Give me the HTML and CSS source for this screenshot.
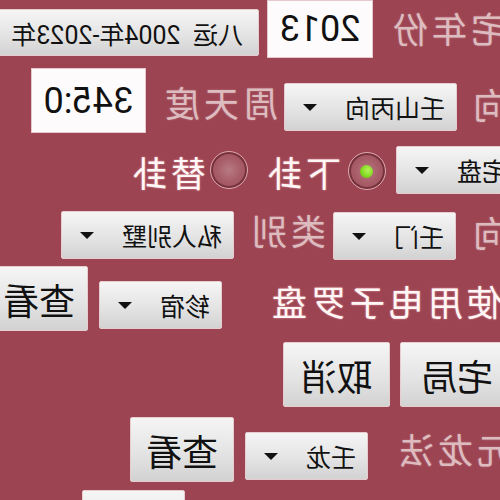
FILE: index.html
```html
<!DOCTYPE html>
<html lang="zh-CN">
<head>
<meta charset="utf-8">
<title>玄空飞星</title>
<link rel="stylesheet" href="styles.css">
</head>
<body>
<div class="page">
  <div class="row r1">
    <span class="label dim lbl-year">住宅年份</span>
    <div class="field f-year">2013</div>
    <div class="btn btn-period">八运&nbsp; 2004年-2023年</div>
  </div>

  <div class="row r2">
    <span class="label dim lbl-zuo">坐向</span>
    <div class="spinner sp-r2"><span class="sp-text">壬山丙向</span><span class="caret"></span></div>
    <span class="label dim lbl-deg">周天度</span>
    <div class="field f-deg">345:0</div>
  </div>

  <div class="row r3">
    <div class="spinner sp-r3"><span class="sp-text">宅盘</span><span class="caret"></span></div>
    <span class="radio checked rd1"></span>
    <span class="label bright lbl-xia">下卦</span>
    <span class="radio rd2"></span>
    <span class="label bright lbl-ti">替卦</span>
  </div>

  <div class="row r4">
    <span class="label dim lbl-men">门向</span>
    <div class="spinner sp-r4a"><span class="sp-text">壬门</span><span class="caret"></span></div>
    <span class="label dim lbl-type">类别</span>
    <div class="spinner sp-r4b"><span class="sp-text">私人别墅</span><span class="caret"></span></div>
  </div>

  <div class="row r5">
    <span class="label bright lbl-compass">使用电子罗盘</span>
    <div class="spinner sp-r5"><span class="sp-text">轸宿</span><span class="caret"></span></div>
    <div class="btn btn-big btn-view1">查看</div>
  </div>

  <div class="row r6">
    <div class="btn btn-big btn-house">宅局</div>
    <div class="btn btn-big btn-cancel">取消</div>
  </div>

  <div class="row r7">
    <span class="label dim lbl-dragon">元龙法</span>
    <div class="spinner sp-r7"><span class="sp-text">壬龙</span><span class="caret"></span></div>
    <div class="btn btn-big btn-view2">查看</div>
  </div>

  <div class="row r8">
    <div class="btn btn-big btn-back">返回</div>
  </div>
</div>
</body>
</html>
```

FILE: styles.css
```css
html, body {
  margin: 0;
  padding: 0;
  background: #9c4452;
}

.page {
  width: 500px;
  height: 500px;
  overflow: hidden;
  transform: scaleX(-1);
  font-family: Roboto, "Noto Sans CJK SC", sans-serif;
  color: #111;
}

.row {
  display: flex;
  align-items: flex-start;
  flex-wrap: nowrap;
}
.row > * { flex-shrink: 0; }

.r1 { height: 58px; }
.r2 { height: 66px; margin-top: 9px; }
.r3 { height: 50px; margin-top: 12px; }
.r4 { height: 50px; margin-top: 15px; }
.r5 { height: 67px; margin-top: 5px; }
.r6 { height: 66px; margin-top: 10px; }
.r7 { height: 65px; margin-top: 9px; }
.r8 { height: 65px; margin-top: 8px; }

/* labels */
.label {
  font-family: "Noto Sans CJK SC", sans-serif;
  font-size: 35px;
  line-height: 40px;
  letter-spacing: 4px;
  white-space: nowrap;
}
.dim {
  color: #ddbcc0;
  text-shadow: 0 0 2px rgba(255, 220, 225, 0.35);
}
.bright {
  color: #fff6f6;
  text-shadow: 0 0 2px rgba(255, 190, 195, 0.8);
}

.lbl-year { margin-left: -45px; margin-top: 8px; }
.lbl-zuo { margin-left: -47px; margin-top: 17px; }
.lbl-deg { margin-left: 6px; margin-top: 15px; }
.lbl-xia { margin-left: 7px; margin-top: 7px; }
.lbl-ti { margin-left: 4px; margin-top: 7px; }
.lbl-men { margin-left: -47px; margin-top: 2px; }
.lbl-type { margin-left: 7px; margin-top: 0; }
.lbl-compass { margin-left: -2px; margin-top: 16px; }
.lbl-dragon { margin-left: -12px; margin-top: 12px; }

/* white input fields */
.field {
  box-sizing: border-box;
  background: #fdfbfb;
  border: 1px solid #e6c8cc;
  font-size: 36px;
  display: flex;
  align-items: center;
  justify-content: center;
  color: #111;
}
.f-year { width: 106px; height: 58px; margin-left: 16px; margin-top: 0; }
.f-deg { width: 115px; height: 65px; margin-left: 15px; margin-top: 1px; }

/* buttons */
.btn {
  box-sizing: border-box;
  background: linear-gradient(#f5f5f5, #e4e4e4 55%, #d2d2d2);
  border: 1px solid #e8cdd0;
  border-radius: 2px;
  display: flex;
  align-items: center;
  white-space: nowrap;
  color: #111;
  font-family: Roboto, "Noto Sans CJK SC", sans-serif;
}
.btn-period {
  height: 47px;
  width: 275px;
  margin-left: 8px;
  margin-top: 9px;
  padding-left: 15px;
  font-size: 25px;
}
.btn-big {
  height: 65px;
  font-family: "Noto Sans CJK SC", sans-serif;
  font-size: 36px;
  justify-content: center;
}
.btn-view1 { width: 110px; margin-left: 11px; margin-top: 1px; justify-content: flex-start; padding-left: 12px; }
.btn-house { width: 112px; margin-left: -12px; justify-content: flex-end; padding-right: 20px; }
.btn-cancel { width: 107px; margin-left: 10px; }
.btn-view2 { width: 104px; margin-left: 11px; }
.btn-back { width: 103px; margin-left: 315px; }

/* spinners */
.spinner {
  box-sizing: border-box;
  height: 48px;
  display: flex;
  align-items: center;
  gap: 28px;
  padding: 0 18px 0 11px;
  background: linear-gradient(#f5f5f5, #e4e4e4 55%, #d2d2d2);
  border: 1px solid #e8cdd0;
  border-radius: 2px;
  font-family: "Noto Sans CJK SC", sans-serif;
  font-size: 25px;
  color: #111;
  white-space: nowrap;
}
.caret {
  width: 0;
  height: 0;
  border-left: 7px solid transparent;
  border-right: 7px solid transparent;
  border-top: 7px solid #111;
}
.sp-r2 { margin-left: 12px; margin-top: 16px; }
.sp-r3 { margin-left: -19px; margin-top: 1px; }
.sp-r4a { margin-left: 13px; margin-top: 2px; }
.sp-r4b { margin-left: 14px; margin-top: 1px; }
.sp-r5 { margin-left: 46px; margin-top: 16px; }
.sp-r7 { margin-left: 27px; margin-top: 15px; }

/* radios */
.radio {
  box-sizing: border-box;
  width: 38px;
  height: 38px;
  border-radius: 50%;
  border: 1.5px solid #dba7ae;
  box-shadow: inset 0 0 0 2px #76323c;
  background: radial-gradient(circle, #b77a83 0, #a85e69 45%, #9e4d59 85%);
  display: flex;
  align-items: center;
  justify-content: center;
}
.radio.checked::after {
  content: "";
  width: 13px;
  height: 13px;
  border-radius: 50%;
  background: radial-gradient(circle at 40% 40%, #b6f25a, #7fd81c 60%, #5cae10);
}
.rd1 { margin-left: 10px; margin-top: 7px; }
.rd2 { margin-left: 15px; margin-top: 6px; }
```
